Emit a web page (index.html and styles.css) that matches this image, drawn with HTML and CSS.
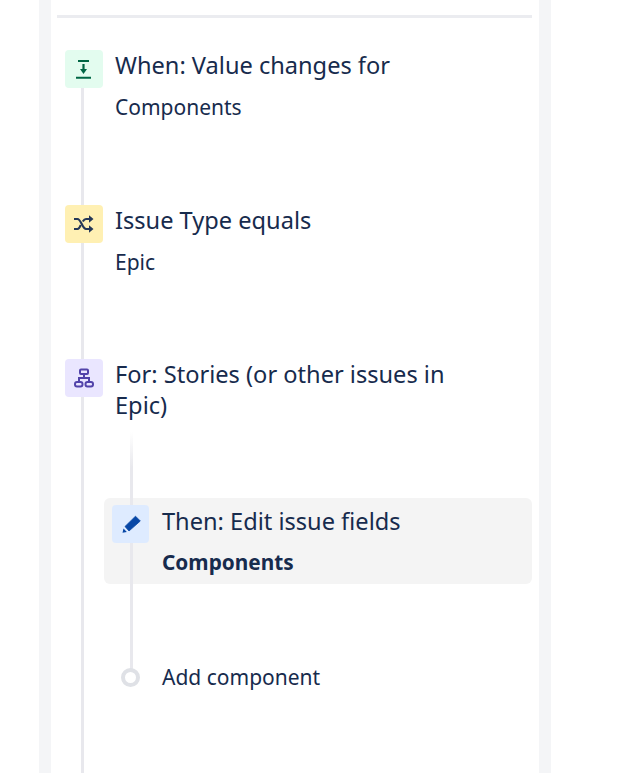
FILE: index.html
```html
<!DOCTYPE html>
<html lang="en">
<head>
    <meta charset="UTF-8">
    <title>Rule details</title>
    <link rel="stylesheet" href="styles.css">
</head>
<body>
    <div class="panel">
        <div class="divider"></div>
        <div class="rule">
            <div class="main-line"></div>

            <div class="step">
                <div class="icon icon-green">
                    <svg width="16" height="20" viewBox="0 0 16 20" fill="none" stroke="#006644" stroke-width="2">
                        <path d="M2 2h11M0 18.700h15"/>
                        <path d="M7.500 5v6" stroke-width="2.200"/>
                        <path d="M4 10h7l-3.500 5z" fill="#006644" stroke="none"/>
                    </svg>
                </div>
                <div class="step-text">
                    <div class="title">When: Value changes for</div>
                    <div class="sub">Components</div>
                </div>
            </div>

            <div class="step step-short">
                <div class="icon icon-yellow">
                    <svg width="20" height="18" viewBox="0 0 20 18" fill="none" stroke="#253858" stroke-width="2.200">
                        <path d="M0 4h3.500c3.500 0 5 10 8.500 10h4"/>
                        <path d="M0 14h3.500c1.500 0 2.500-2 3.200-4M8.800 6.500c.9-1.400 1.900-2.500 3.200-2.500h4"/>
                        <path d="M15 0.300l4.500 3.700-4.500 3.700zM15 10.300l4.500 3.700-4.500 3.700z" fill="#253858" stroke="none"/>
                    </svg>
                </div>
                <div class="step-text">
                    <div class="title">Issue Type equals</div>
                    <div class="sub">Epic</div>
                </div>
            </div>

            <div class="step step-branch">
                <div class="icon icon-purple">
                    <svg width="20" height="20" viewBox="0 0 20 20" fill="none" stroke="#5243aa" stroke-width="2">
                        <rect x="6" y="1.500" width="8" height="4.500" rx="1"/>
                        <rect x="1" y="14" width="7.500" height="4.500" rx="2"/>
                        <rect x="11.500" y="14" width="7.500" height="4.500" rx="2"/>
                        <path d="M10 6v4M5 14v-4h10v4"/>
                    </svg>
                </div>
                <div class="step-text">
                    <div class="title title-wrap">For: Stories (or other issues in Epic)</div>
                </div>
            </div>

            <div class="branch">
                <div class="branch-line"></div>

                <div class="card">
                    <div class="icon icon-blue">
                        <svg width="20" height="20" viewBox="0 0 20 20" fill="#0747a6">
                            <path d="M14.500 2.200l4.800 4.800-11.300 10-4-4.500z" stroke="#0747a6" stroke-width="0.800" stroke-linejoin="round"/>
                            <path d="M1.500 18.800l1-4.400 3.300 3.500z"/>
                        </svg>
                    </div>
                    <div class="step-text">
                        <div class="title title-nudge">Then: Edit issue fields</div>
                        <div class="sub sub-bold">Components</div>
                    </div>
                </div>

                <div class="add">
                    <div class="add-slot"><span class="dot"></span></div>
                    <span class="add-label">Add component</span>
                </div>
            </div>
        </div>
    </div>
</body>
</html>
```

FILE: styles.css
```css
* {
    margin: 0;
    padding: 0;
    box-sizing: border-box;
}

body {
    font-family: "Noto Sans", sans-serif;
    background: #ffffff;
    color: #172b4d;
    height: 773px;
    overflow: hidden;
}

.panel {
    margin-left: 39px;
    width: 512px;
    height: 773px;
    padding: 15px 19px 0 18px;
    border-left: 12px solid #f4f5f7;
    border-right: 12px solid #f4f5f7;
}

.divider {
    height: 3px;
    margin-left: -12px;
    width: 475px;
    background: #ebecf0;
}

.rule {
    position: relative;
    margin-left: -4px;
    padding-top: 32px;
}

.main-line {
    position: absolute;
    left: 16px;
    top: 40px;
    height: 733px;
    width: 3px;
    background: #e8e8ed;
}

.step {
    position: relative;
    display: flex;
    gap: 12px;
    height: 155px;
}

.step-short {
    height: 154px;
}

.step-branch {
    height: 139px;
}

.icon {
    position: relative;
    flex: none;
    width: 38px;
    height: 38px;
    border-radius: 4px;
    display: flex;
    align-items: center;
    justify-content: center;
}

.icon-green { background: #e3fcef; }
.icon-yellow { background: #fff0b3; }
.icon-purple { background: #eae6ff; }
.icon-blue { background: #deebff; }

.title {
    font-size: 23.600px;
    line-height: 31px;
}

.title-nudge {
    padding-top: 1px;
}

.title-wrap {
    width: 345px;
}

.sub {
    font-size: 21px;
    line-height: 26px;
    margin-top: 13px;
}

.title-nudge + .sub {
    margin-top: 12px;
}

.sub-bold {
    font-weight: 700;
    font-size: 20.800px;
}

.branch {
    position: relative;
    margin-left: 39px;
}

.branch-line {
    position: absolute;
    left: 26px;
    top: -66px;
    height: 240px;
    width: 3px;
    background: linear-gradient(to bottom, #ffffff, #e8e8ed 15%);
}

.card {
    display: flex;
    gap: 13px;
    height: 86px;
    width: 428px;
    padding: 7px 8px;
    border-radius: 6px;
    background: #f4f4f4;
}

.card .icon {
    width: 37px;
}

.add {
    position: relative;
    display: flex;
    align-items: center;
    margin-top: 80px;
    height: 26px;
}

.add-slot {
    width: 58px;
    padding-left: 17px;
}

.dot {
    display: block;
    width: 19px;
    height: 19px;
    border-radius: 50%;
    border: 4px solid #dfe1e6;
    background: #fff;
}

.add-label {
    font-size: 21px;
}
```
